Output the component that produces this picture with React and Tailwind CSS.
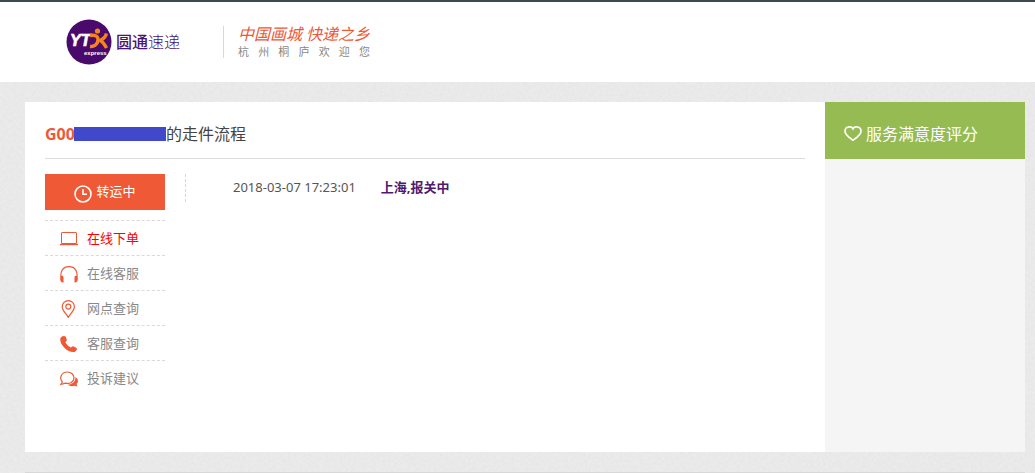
const SERVICES = [
  { label: "在线下单", icon: LaptopIcon, active: true },
  { label: "在线客服", icon: HeadsetIcon },
  { label: "网点查询", icon: PinIcon },
  { label: "客服查询", icon: PhoneIcon },
  { label: "投诉建议", icon: ChatIcon },
];

const EVENTS = [{ time: "2018-03-07 17:23:01", text: "上海,报关中" }];

function LaptopIcon() {
  return (
    <svg viewBox="0 0 18 18" className="size-[18px]" fill="none" stroke="currentColor" aria-hidden>
      <rect x="1.5" y="2.5" width="15" height="11" rx="0.5" />
      <path d="M0 14.500h18" strokeWidth="1.4" />
    </svg>
  );
}

function HeadsetIcon() {
  return (
    <svg viewBox="0 0 18 18" className="size-[18px]" fill="none" stroke="currentColor" strokeWidth="1.2" aria-hidden>
      <path d="M1.2 14C-.2 6 3 1.600 9 1.600s9.200 4.400 7.800 12.400" />
      <path d="M1 11c1.500-.5 2.500.2 2.500 1.500v5C1.500 17.800.2 16.500.2 14zM17 11c-1.500-.5-2.500.2-2.500 1.500v5c2 .3 3.300-1 3.300-3.500z" fill="currentColor" stroke="none" />
    </svg>
  );
}

function PinIcon() {
  return (
    <svg viewBox="0 0 18 18" className="size-[18px]" fill="none" stroke="currentColor" strokeWidth="1.2" aria-hidden>
      <path d="M8.300 17.400C6 13.500 2.200 10.300 2.200 6.700a6.100 6.100 0 0 1 12.200 0c0 3.600-3.800 6.800-6.100 10.700z" />
      <circle cx="8.300" cy="6.600" r="2.500" />
    </svg>
  );
}

function PhoneIcon() {
  return (
    <svg viewBox="0 0 18 18" className="size-[18px]" fill="currentColor" aria-hidden>
      <path d="M.5 3C1.500 1 4.500.3 5.800 1.800l1 3c.2 1-1.300 1.700-1.300 2.500.8 2 3 4.200 5.200 5.200.9-.2 1.500-1.500 2.500-1.300l3.400 1.700c1 1-.3 3.500-2 4C8.500 18.500-1.500 9 .5 3z" />
    </svg>
  );
}

function ChatIcon() {
  return (
    <svg viewBox="0 0 18 18" className="size-[18px]" fill="none" stroke="currentColor" strokeWidth="1.2" aria-hidden>
      <path d="M2.300 12C-1.200 8 1.500 2 7.300 2c3.900 0 6.700 2.600 6.700 5.800 0 4.200-4.400 6.500-8.500 5.300L.8 14.500z" />
      <path d="M15.600 7c3 2 2.900 5.500 1 7l.9 2.600-3.100-.9c-2.500 1-5.300.3-6.500-1.100C12.500 14.500 15.600 11.500 15.600 7z" fill="currentColor" stroke="none" />
    </svg>
  );
}

function ClockIcon() {
  return (
    <svg viewBox="0 0 18 18" className="mt-1 size-[18px]" fill="none" stroke="currentColor" strokeWidth="1.6" aria-hidden>
      <circle cx="9" cy="9" r="8" />
      <path d="M9 4v5.300h4" />
    </svg>
  );
}

function HeartIcon() {
  return (
    <svg viewBox="0 0 18 16" className="h-4 w-[18px]" fill="none" stroke="currentColor" strokeWidth="1.7" aria-hidden>
      <path d="M9 2.800C7.500-.2 1 .3 1 5.200 1 9 6 12 9 14.200c3-2.200 8-5.200 8-9C17 .3 10.500-.2 9 2.800z" />
    </svg>
  );
}

function Logo() {
  return (
    <svg viewBox="0 0 46 46" className="size-[46px]" aria-hidden>
      <circle cx="23" cy="23" r="22.5" fill="#4a0a6b" />
      <text x="4" y="27" fill="#fff" stroke="#fff" strokeWidth="0.7" fontSize="16" fontWeight="700" fontStyle="italic" fontFamily="Liberation Sans, sans-serif">YT</text>
      <g fill="none" stroke="#f5841f" strokeWidth="3.4">
        <path d="M24 16.500c5.500-1 8.500 1 8 5s-4 6.500-8 6" />
        <path d="M40.500 14.500c-1 3.500-3 5.500-6.500 7 3 1.500 4.500 3.500 6.500 7.500" />
      </g>
      <circle cx="31.500" cy="12" r="2.600" fill="#f5841f" />
      <text x="18" y="36" fill="#fff" fontSize="6" fontWeight="700" fontFamily="Liberation Sans, sans-serif">express</text>
    </svg>
  );
}

// Fine paper grain behind the page
function PaperTexture() {
  return (
    <svg className="pointer-events-none absolute inset-0 -z-10 size-full" aria-hidden>
      <filter id="grain">
        <feTurbulence type="fractalNoise" baseFrequency="0.35" numOctaves="2" />
        <feColorMatrix values="0 0 0 0 0.5  0 0 0 0 0.5  0 0 0 0 0.5  0.2 0 0 0 -0.06" />
      </filter>
      <rect width="100%" height="100%" filter="url(#grain)" />
    </svg>
  );
}

function Header() {
  return (
    <header className="flex h-[82px] items-center border-t-2 border-[#3d4a4d] bg-white pl-[66px]">
      <a href="#" className="flex items-center gap-1 text-base text-[#4a1470]">
        <Logo />
        <span>
          <span className="font-medium">圆通</span>
          <span className="font-light">速递</span>
        </span>
      </a>
      <div className="ml-[43px] flex h-8 w-[147px] flex-col justify-between border-l border-[#d8d8d8] pl-[14px]">
        <p className="flex justify-between text-base leading-4 text-[#ee5836] italic">
          <span>中国画城</span>
          <span>快递之乡</span>
        </p>
        <p className="flex justify-between text-[11px] leading-3 text-[#888]">
          {[..."杭州桐庐欢迎您"].map((char) => (
            <span key={char}>{char}</span>
          ))}
        </p>
      </div>
    </header>
  );
}

function ServiceNav() {
  return (
    <nav className="w-[120px] shrink-0">
      <button className="flex h-9 w-full items-center justify-center gap-1 bg-[#ef5935] text-[13px] text-white">
        <ClockIcon />
        转运中
      </button>
      <ul className="mt-[10px]">
        {SERVICES.map(({ label, icon: Icon, active }) => (
          <li key={label} className="border-t border-dashed border-[#d9d9d9]">
            <a href="#" className="flex h-[34px] items-center gap-[9px] pt-px pl-[15px] text-[13px]">
              <span className="text-[#ef5935]">
                <Icon />
              </span>
              <span className={active ? "text-[#f00]" : "text-[#888]"}>{label}</span>
            </a>
          </li>
        ))}
      </ul>
    </nav>
  );
}

export default function App() {
  return (
    <div className="relative isolate min-h-screen bg-[#ebebeb] font-['Noto_Sans','Noto_Sans_CJK_SC',sans-serif]">
      <PaperTexture />
      <Header />
      <main className="mt-5 mr-[10px] ml-[25px] flex min-h-[350px]">
        <section className="min-w-0 flex-1 bg-white px-5">
          <h1 className="flex h-[57px] items-center border-b border-[#dcdcdc] pt-[7px] text-base text-[#444]">
            <span className="font-bold text-[#ef5935]">G00</span>
            <span className="-ml-px h-[14px] w-[92px] bg-[#4048cc]" />
            <span>的走件流程</span>
          </h1>
          <div className="mt-[15px] flex">
            <ServiceNav />
            <ol className="ml-5 h-7 border-l border-dashed border-[#d9d9d9] pl-[47px] text-[13px]">
              {EVENTS.map(({ time, text }) => (
                <li key={time} className="flex h-7 items-center gap-[25px]">
                  <time className="text-[#555]">{time}</time>
                  <span className="font-bold text-[#4f1a6b]">{text}</span>
                </li>
              ))}
            </ol>
          </div>
        </section>
        <aside className="w-[200px] shrink-0 bg-[#f5f5f5]">
          <h2 className="flex h-[57px] items-center gap-1 bg-[#95bb52] pt-[7px] pl-[19px] text-base text-white">
            <HeartIcon />
            服务满意度评分
          </h2>
        </aside>
      </main>
      <footer className="mt-5 mr-[10px] ml-[25px] border-t border-[#d8d8d8]" />
    </div>
  );
}
